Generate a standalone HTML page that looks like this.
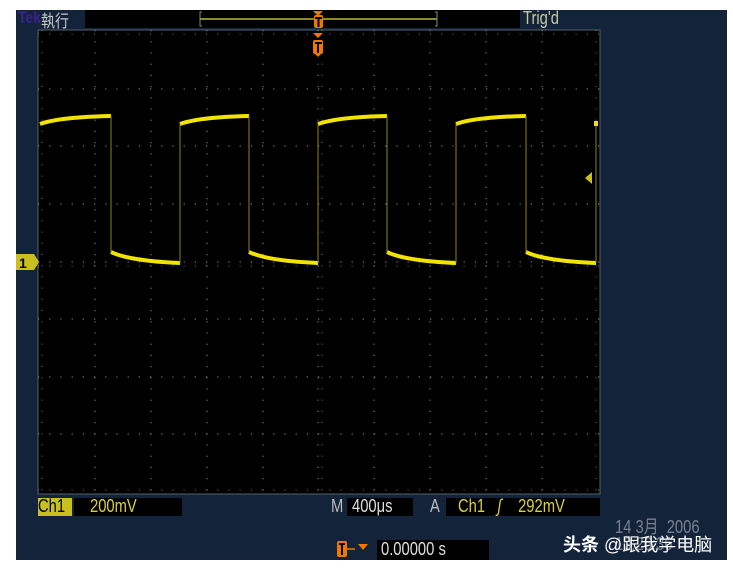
<!DOCTYPE html><html><head><meta charset="utf-8"><style>
html,body{margin:0;padding:0;background:#fff;width:733px;height:568px;overflow:hidden}
.t{position:absolute;font-family:"Liberation Sans","Noto Sans CJK SC",sans-serif;white-space:nowrap;transform:scaleX(0.82);transform-origin:0 0}
</style></head><body>
<div style="position:absolute;left:16px;top:10px;width:711px;height:550px;background:#13233a"></div>
<div style="position:absolute;left:85px;top:10px;width:435px;height:18px;background:#000"></div>
<div class="t" style="left:18px;top:8px;font-size:17px;color:#3a2090;font-weight:bold">Tek</div>
<div class="t" style="left:41px;top:7px;font-size:17px;color:#c8c8c8">執行</div>
<div class="t" style="left:523px;top:8px;font-size:18px;color:#c8c8a0">Trig'd</div>
<svg style="position:absolute;left:0;top:0" width="733" height="568">
<line x1="200" y1="19" x2="437" y2="19" stroke="#8a8a30" stroke-width="2"/>
<path d="M202,12 h-2 v14 h2 M435,12 h2 v14 h-2" stroke="#8a8a60" fill="none"/>
<rect x="38" y="30" width="562" height="464" fill="#000" stroke="#556070"/>
<g stroke="#777" stroke-width="1.2" stroke-dasharray="1.2 10" fill="none">
<path d="M38,89h562M38,146h562M38,204h562M38,262h562M38,319h562M38,377h562M38,434h562"/>
<path d="M95,30v464M151,30v464M207,30v464M263,30v464M318,30v464M374,30v464M430,30v464M486,30v464M542,30v464"/>
</g>
<g stroke="#777" stroke-width="1" stroke-dasharray="1 10.2" fill="none">
<path d="M38,34h562M38,490h562M38,266h562M322,30v464M42,30v464M596,30v464"/>
</g>
<g stroke="#f2e400" stroke-width="4" fill="none" stroke-linejoin="round">
<path d="M40,124 Q60,117 111,116"/><path d="M111,252 Q130,261 180,263"/>
<path d="M180,124 Q200,117 249,116"/><path d="M249,252 Q268,261 318,263"/>
<path d="M318,124 Q338,117 387,116"/><path d="M387,252 Q406,261 456,263"/>
<path d="M456,124 Q476,117 526,116"/><path d="M526,252 Q545,261 596,263"/>
<path d="M596,126 v-5"/>
</g>
<g stroke="#8a8420" stroke-width="1"><path d="M111,116v136M180,124v139M249,116v136M318,124v139M387,116v136M456,124v139M526,116v136M596,126v137"/></g>
<path d="M16,254h18l5,8l-5,8h-18z" fill="#c9c020"/>
<text x="19" y="268" font-family="Liberation Sans" font-size="14" font-weight="bold" fill="#000">1</text>
<path d="M585,178l7,-6v12z" fill="#c9c020"/>
<g fill="#f07800"><path d="M313,11h10l-5,5z"/><rect x="314" y="15" width="9" height="13" rx="2"/>
<path d="M313,33h10l-5,5z"/><rect x="313" y="40" width="10" height="14" rx="2"/><path d="M315,54h6l-3,3z"/>
<rect x="337" y="541" width="10" height="16" rx="2"/><path d="M358,544h10l-5,6z"/></g>
<g stroke="#000" stroke-width="2"><path d="M315,18h7M318.5,18v9M315,43h7M318,43v10M339,544h6M342,544v11"/></g>
<path d="M347,549h8" stroke="#f07800" stroke-width="1.5"/>
</svg>
<div style="position:absolute;left:38px;top:498px;width:34px;height:18px;background:#c8c020"></div>
<div class="t" style="left:38px;top:496px;font-size:18px;color:#000">Ch1</div>
<div style="position:absolute;left:74px;top:498px;width:108px;height:18px;background:#000"></div>
<div class="t" style="left:90px;top:496px;font-size:18px;color:#d8d040">200mV</div>
<div class="t" style="left:331px;top:496px;font-size:18px;color:#bbb">M</div>
<div style="position:absolute;left:347px;top:498px;width:66px;height:18px;background:#000"></div>
<div class="t" style="left:352px;top:496px;font-size:18px;color:#ddd">400μs</div>
<div class="t" style="left:430px;top:496px;font-size:18px;color:#bbb">A</div>
<div style="position:absolute;left:446px;top:498px;width:154px;height:18px;background:#000"></div>
<div class="t" style="left:458px;top:496px;font-size:18px;color:#d8d040">Ch1&nbsp;&nbsp;&nbsp;<i>ʃ</i>&nbsp;&nbsp;&nbsp;&nbsp;292mV</div>
<div style="position:absolute;left:377px;top:540px;width:112px;height:20px;background:#000"></div>
<div class="t" style="left:381px;top:539px;font-size:18px;color:#ddd">0.00000 s</div>
<div class="t" style="left:615px;top:519px;font-size:18px;color:#7a8090;line-height:17px">14 3月&nbsp; 2006<br>10:26:36</div>
<div style="position:absolute;left:563px;top:531px;font-size:18px;color:#fff;font-weight:bold;font-family:'Liberation Sans','Noto Sans CJK SC',sans-serif;white-space:nowrap">头条 <span style="font-weight:normal">@跟我学电脑</span></div>
</body></html>
